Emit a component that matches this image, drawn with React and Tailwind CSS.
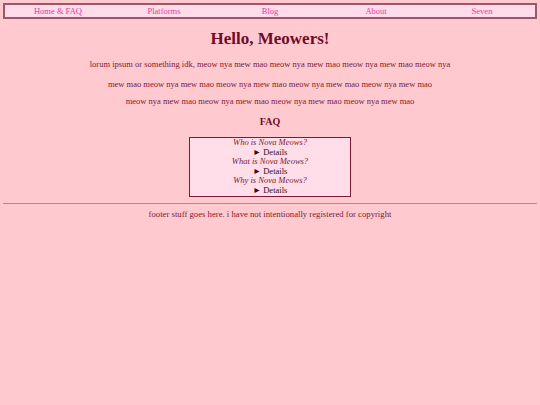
export default function App() {
  const navItems = ['Home & FAQ', 'Platforms', 'Blog', 'About', 'Seven'];
  const faqs = ['Who is Nova Meows?', 'What is Nova Meows?', 'Why is Nova Meows?'];

  return (
    <div className="min-h-[405px] bg-[#ffcacf] px-[3px] pt-[3px] text-[#7a1a35]" style={{ fontFamily: '"Liberation Serif", serif' }}>
      <nav className="flex border-2 border-[#a0566a] bg-[#ffdcea] text-[8.5px] leading-[12px] text-[#e0409a]">
        {navItems.map(item => (
          <a key={item} href="#" className="flex-1 text-center">{item}</a>
        ))}
      </nav>

      <h1 className="mt-[9px] text-center text-[17px] font-bold leading-[22px] text-[#6e0b25]">Hello, Meowers!</h1>

      <p className="mt-[8px] text-center text-[8.5px] leading-[12px]">
        lorum ipsum or something idk, meow nya mew mao meow nya mew mao meow nya mew mao meow nya
      </p>
      <p className="mt-[8px] text-center text-[8.5px] leading-[12px]">
        mew mao meow nya mew mao meow nya mew mao meow nya mew mao meow nya mew mao
      </p>
      <p className="mt-[5px] text-center text-[8.5px] leading-[12px]">
        meow nya mew mao meow nya mew mao meow nya mew mao meow nya mew mao
      </p>

      <h2 className="mt-[8px] text-center text-[10px] font-bold leading-[14px] text-[#6e0b25]">FAQ</h2>

      <div className="mx-auto mt-[8px] w-[162px] border border-[#7a1a35] bg-[#ffdde9] text-center text-[8.5px] leading-[9.6px]">
        {faqs.map(q => (
          <div key={q}>
            <div className="italic">{q}</div>
            <div className="text-[#3a0a18]">► Details</div>
          </div>
        ))}
      </div>

      <hr className="mt-[6px] border-t border-[#c0808e]" />

      <footer className="mt-[4px] text-center text-[8.7px] leading-[12px]">
        footer stuff goes here. i have not intentionally registered for copyright
      </footer>
    </div>
  );
}
